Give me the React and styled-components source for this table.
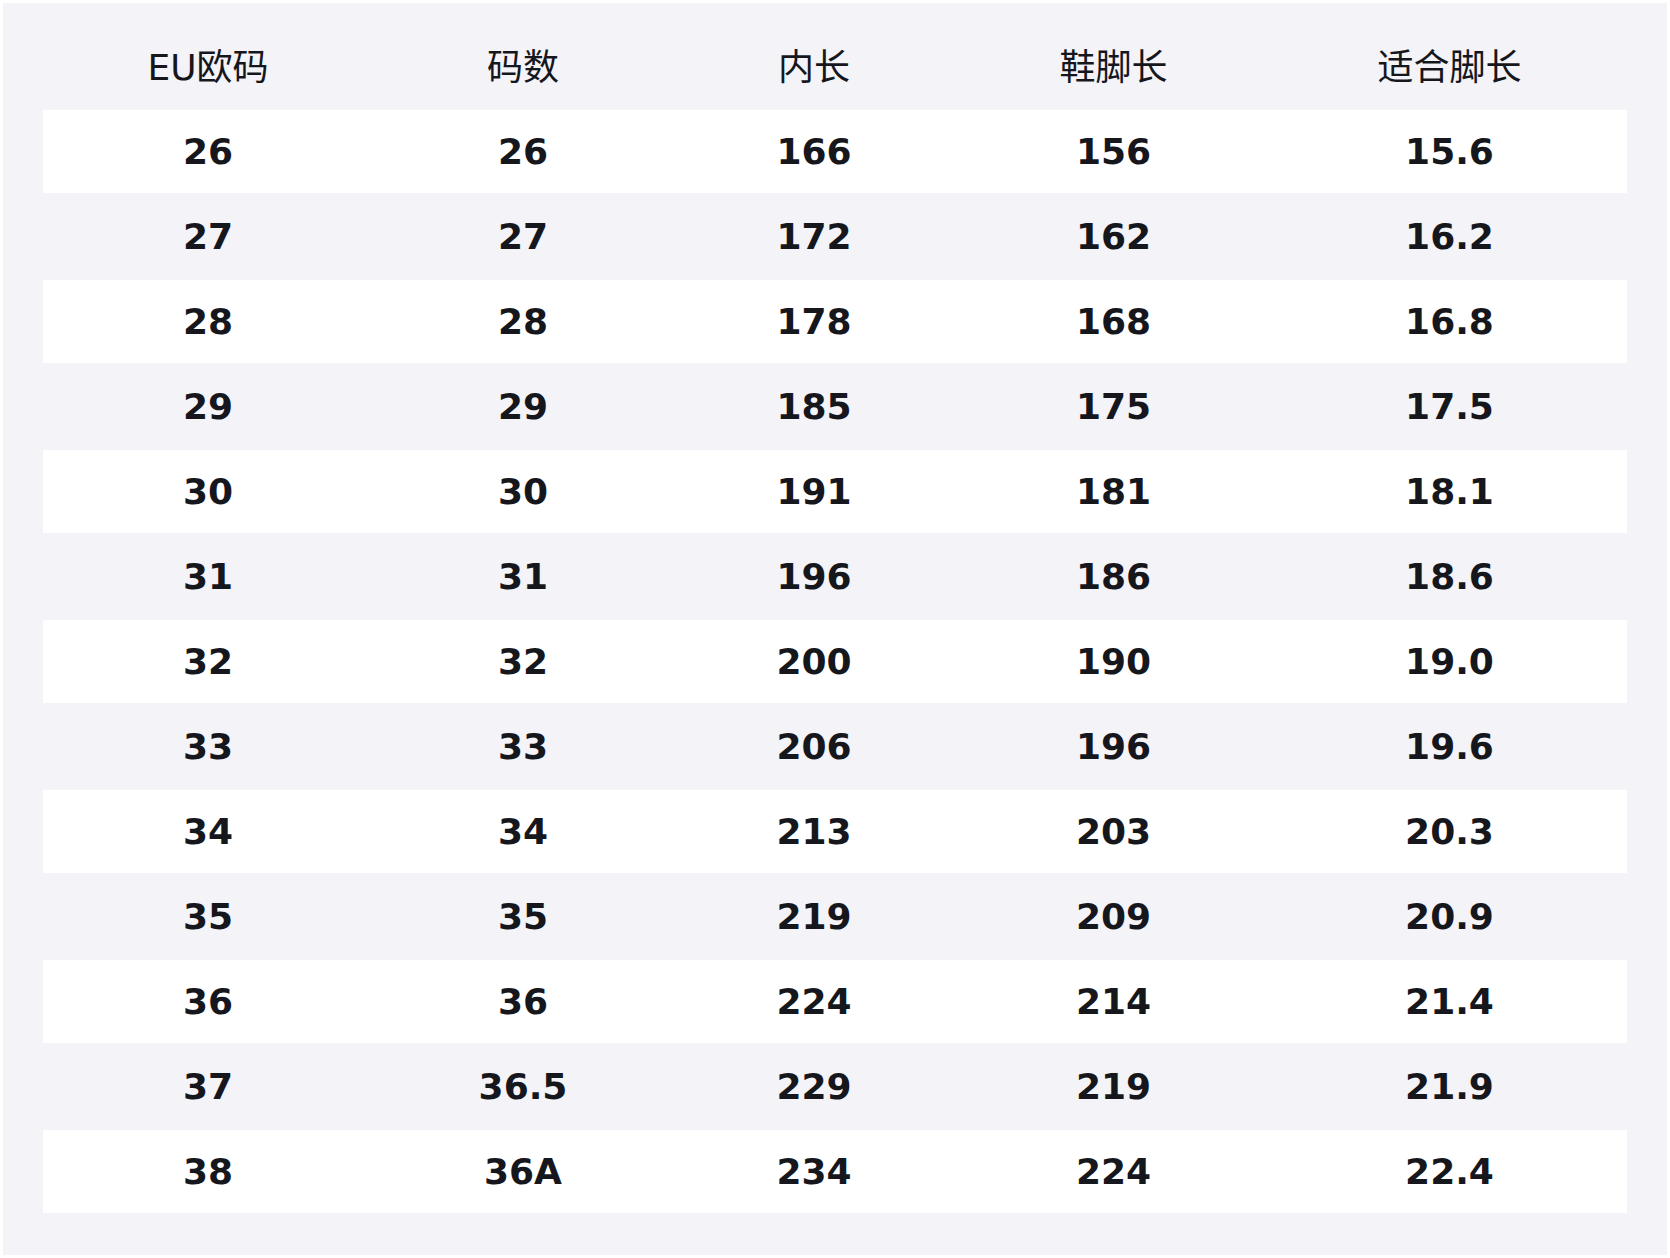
import styled, { createGlobalStyle } from "styled-components";

const columns = [
  { key: "eu", title: "EU欧码", width: 330 },
  { key: "size", title: "码数", width: 300 },
  { key: "inner", title: "内长", width: 282 },
  { key: "shoe", title: "鞋脚长", width: 317 },
  { key: "foot", title: "适合脚长", width: 355 },
];

const sizes = [
  ["26", "26", "166", "156", "15.6"],
  ["27", "27", "172", "162", "16.2"],
  ["28", "28", "178", "168", "16.8"],
  ["29", "29", "185", "175", "17.5"],
  ["30", "30", "191", "181", "18.1"],
  ["31", "31", "196", "186", "18.6"],
  ["32", "32", "200", "190", "19.0"],
  ["33", "33", "206", "196", "19.6"],
  ["34", "34", "213", "203", "20.3"],
  ["35", "35", "219", "209", "20.9"],
  ["36", "36", "224", "214", "21.4"],
  ["37", "36.5", "229", "219", "21.9"],
  ["38", "36A", "234", "224", "22.4"],
];

export default function App() {
  return (
    <>
      <GlobalStyle />
      <Panel>
        <SizeTable>
          <colgroup>
            {columns.map((col) => (
              <col key={col.key} style={{ width: col.width }} />
            ))}
          </colgroup>
          <thead>
            <tr>
              {columns.map((col) => (
                <HeadCell key={col.key}>{col.title}</HeadCell>
              ))}
            </tr>
          </thead>
          <tbody>
            {sizes.map((row, i) => (
              <Row key={row[0]} $filled={i % 2 === 0}>
                {row.map((value, j) => (
                  <Cell key={columns[j].key}>{value}</Cell>
                ))}
              </Row>
            ))}
          </tbody>
        </SizeTable>
      </Panel>
    </>
  );
}

const GlobalStyle = createGlobalStyle`
  html, body {
    margin: 0;
    padding: 0;
    background: #fff;
  }

  body {
    font-family: "DejaVu Sans", "Noto Sans CJK SC", sans-serif;
    color: #16171c;
  }
`;

const Panel = styled.div`
  margin: 3px;
  padding: 40px;

  background-color: #f3f3f8;
`;

const SizeTable = styled.table`
  width: 100%;
  table-layout: fixed;
  border-collapse: separate;
  border-spacing: 0 2px;
`;

const HeadCell = styled.th`
  padding: 2px 0 19px;

  font-size: 36px;
  font-weight: 400;
  line-height: 42px;
  text-align: center;
  vertical-align: top;
  white-space: nowrap;
`;

const Row = styled.tr`
  background-color: ${(props) => (props.$filled ? "#ffffff" : "transparent")};
`;

const Cell = styled.td`
  height: 83px;
  padding: 0;

  font-size: 36px;
  font-weight: 700;
  line-height: 42px;
  text-align: center;
  vertical-align: middle;
  white-space: nowrap;
`;
